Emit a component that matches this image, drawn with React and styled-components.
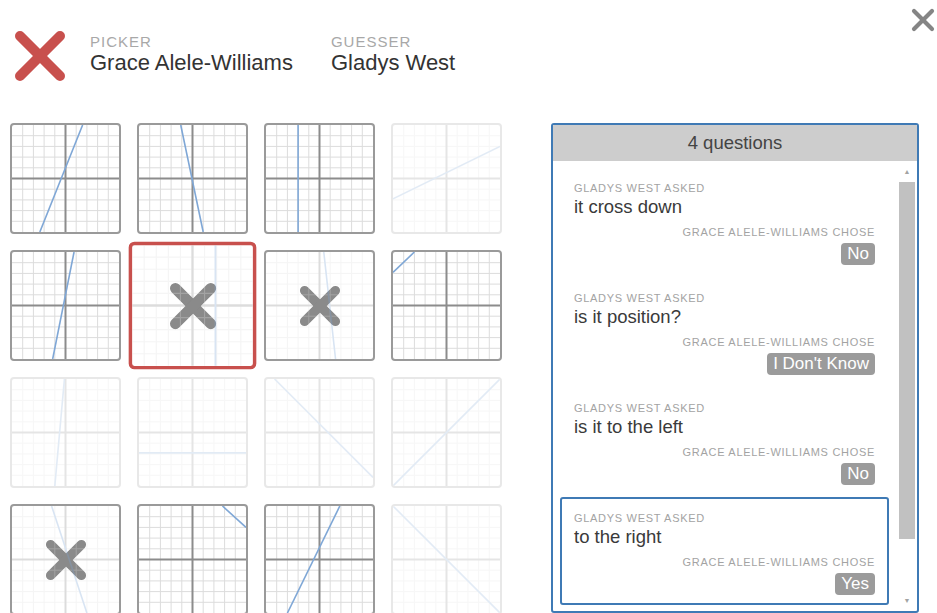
import React from "react";
import styled, { createGlobalStyle } from "styled-components";

const GlobalStyle = createGlobalStyle`
  html, body {
    margin: 0;
    padding: 0;
    background: #fff;
  }
  body {
    font-family: "Liberation Sans", Arial, sans-serif;
    color: #333;
    overflow: hidden;
  }
  * {
    box-sizing: border-box;
  }
`;

const red = "#c8504d";
const blue = "#3f7ab5";

// line endpoints in a 0..100 box, y down
const cards = [
  { line: [26, 100, 66, 0] },
  { line: [39, 0, 60, 100] },
  { line: [30, 0, 30, 100] },
  { line: [0, 69, 100, 20], faded: true },
  { line: [58, 0, 38, 100] },
  { line: [69, 0, 69, 100], crossed: true, picked: true },
  { line: [54, 0, 65, 100], crossed: true },
  { line: [0, 19, 20, 0] },
  { line: [49, 0, 40, 100], faded: true },
  { line: [0, 69, 100, 69], faded: true },
  { line: [8, 0, 100, 92], faded: true },
  { line: [0, 100, 100, 0], faded: true },
  { line: [37, 0, 70, 100], crossed: true },
  { line: [78, 0, 100, 20] },
  { line: [69, 0, 20, 100] },
  { line: [0, 0, 100, 100], faded: true },
];

const questions = [
  { text: "it cross down", answer: "No" },
  { text: "is it position?", answer: "I Don't Know" },
  { text: "is it to the left", answer: "No" },
  { text: "to the right", answer: "Yes", active: true },
];

const ticks = [10, 20, 30, 40, 60, 70, 80, 90];

function Graph({ line, dim }) {
  const [x1, y1, x2, y2] = line;
  return (
    <Plot viewBox="0 0 100 100" preserveAspectRatio="none" $dim={dim}>
      {ticks.map((t) => (
        <g key={t} stroke="#dcdcdc" strokeWidth="1">
          <line x1={t} y1="0" x2={t} y2="100" vectorEffect="non-scaling-stroke" />
          <line x1="0" y1={t} x2="100" y2={t} vectorEffect="non-scaling-stroke" />
        </g>
      ))}
      <line x1="50" y1="0" x2="50" y2="100" stroke="#8c8c8c" strokeWidth="2" vectorEffect="non-scaling-stroke" />
      <line x1="0" y1="50" x2="100" y2="50" stroke="#8c8c8c" strokeWidth="2" vectorEffect="non-scaling-stroke" />
      <line x1={x1} y1={y1} x2={x2} y2={y2} stroke="#7fa7d6" strokeWidth="1.6" vectorEffect="non-scaling-stroke" />
    </Plot>
  );
}

function Cross({ size, color, weight, inset = 6 }) {
  const far = 40 - inset;
  return (
    <svg width={size} height={size} viewBox="0 0 40 40">
      <g stroke={color} strokeWidth={weight} strokeLinecap="round">
        <line x1={inset} y1={inset} x2={far} y2={far} />
        <line x1={far} y1={inset} x2={inset} y2={far} />
      </g>
    </svg>
  );
}

function App() {
  return (
    <>
      <GlobalStyle />
      <Page>
        <Header>
          <Identity>
            <Cross size={50} color={red} weight={8} inset={4} />
            <Players>
              <Player>
                <Role>Picker</Role>
                <Name>Grace Alele-Williams</Name>
              </Player>
              <Player>
                <Role>Guesser</Role>
                <Name>Gladys West</Name>
              </Player>
            </Players>
          </Identity>
          <Close aria-label="close">
            <Cross size={24} color="#858585" weight={7} inset={5} />
          </Close>
        </Header>

        <Board>
          <Grid>
            {cards.map((card, i) => (
              <Card key={i} $faded={card.faded} $picked={card.picked}>
                <Graph line={card.line} dim={card.crossed} />
                {card.crossed && (
                  <Mark>
                    <Cross size={44} color="#8a8a8a" weight={8.5} />
                  </Mark>
                )}
              </Card>
            ))}
          </Grid>

          <Panel>
            <PanelHead>4 questions</PanelHead>
            <PanelBody>
              <Feed>
                {questions.map((q, i) => (
                  <Entry key={i} $active={q.active}>
                    <Caption>Gladys West asked</Caption>
                    <Question>{q.text}</Question>
                    <Caption $right>Grace Alele-Williams chose</Caption>
                    <AnswerRow>
                      <Badge>{q.answer}</Badge>
                    </AnswerRow>
                  </Entry>
                ))}
              </Feed>
              <ScrollBar>
                <Arrow>▲</Arrow>
                <Thumb />
                <Track />
                <Arrow>▼</Arrow>
              </ScrollBar>
            </PanelBody>
          </Panel>
        </Board>
      </Page>
    </>
  );
}

export default App;

const Page = styled.div`
  width: 937px;
  height: 613px;
  overflow: hidden;
`;

const Header = styled.header`
  display: flex;
  align-items: flex-start;
  padding: 8px 2px 0 15px;
`;

const Identity = styled.div`
  display: flex;
  align-items: flex-start;
  gap: 25px;
  margin-top: 23px;
`;

const Players = styled.div`
  display: flex;
  gap: 38px;
  margin-top: 2px;
`;

const Player = styled.div`
  display: flex;
  flex-direction: column;
`;

const Role = styled.span`
  font-size: 15px;
  line-height: 17px;
  letter-spacing: 1px;
  text-transform: uppercase;
  color: #a8a8a8;
`;

const Name = styled.span`
  font-size: 22px;
  line-height: 25px;
  color: #333;
`;

const Close = styled.button`
  margin-left: auto;
  padding: 0;
  border: none;
  background: none;
  display: flex;
  cursor: pointer;
`;

const Board = styled.main`
  display: flex;
  align-items: flex-start;
  gap: 49px;
  margin-top: 42px;
  padding-left: 10px;
`;

const Grid = styled.div`
  display: grid;
  grid-template-columns: repeat(4, 111px);
  grid-auto-rows: 111px;
  gap: 16px;
`;

const Card = styled.div`
  display: grid;
  border: ${({ $picked }) => ($picked ? `3px solid ${red}` : "2px solid #9a9a9a")};
  border-radius: ${({ $picked }) => ($picked ? "5px" : "4px")};
  background: #fff;
  overflow: hidden;
  opacity: ${({ $faded }) => ($faded ? 0.22 : 1)};
  transform: ${({ $picked }) => ($picked ? "scale(1.15)" : "none")};
  z-index: ${({ $picked }) => ($picked ? 1 : 0)};
  cursor: pointer;
`;

const Plot = styled.svg`
  grid-area: 1 / 1;
  width: 100%;
  height: 100%;
  display: block;
  opacity: ${({ $dim }) => ($dim ? 0.3 : 1)};
`;

const Mark = styled.div`
  grid-area: 1 / 1;
  display: flex;
  align-items: center;
  justify-content: center;
`;

const Panel = styled.section`
  width: 368px;
  height: 490px;
  border: 2px solid ${blue};
  border-radius: 3px;
  display: flex;
  flex-direction: column;
  overflow: hidden;
`;

const PanelHead = styled.div`
  height: 36px;
  flex-shrink: 0;
  display: flex;
  align-items: center;
  justify-content: center;
  background: #cdcdcd;
  font-size: 18.5px;
  color: #444;
`;

const PanelBody = styled.div`
  flex: 1;
  display: flex;
  min-height: 0;
`;

const Feed = styled.div`
  flex: 1;
  padding: 6px 9px 0 7px;
  overflow: hidden;
`;

const Entry = styled.div`
  border: 2px solid ${({ $active }) => ($active ? blue : "transparent")};
  border-radius: 3px;
  padding: 12px 12px 8px;
  margin-bottom: 2px;
`;

const Caption = styled.div`
  font-size: 11px;
  line-height: 14px;
  letter-spacing: 0.7px;
  text-transform: uppercase;
  color: #a3a3a3;
  text-align: ${({ $right }) => ($right ? "right" : "left")};
`;

const Question = styled.div`
  font-size: 18.5px;
  line-height: 22px;
  color: #3a3a3a;
  margin: 1px 0 7px;
`;

const AnswerRow = styled.div`
  display: flex;
  justify-content: flex-end;
  margin-top: 4px;
`;

const Badge = styled.span`
  background: #9b9b9b;
  color: #fff;
  font-size: 17px;
  line-height: 22px;
  padding: 0 6px;
  border-radius: 4px;
`;

const ScrollBar = styled.div`
  width: 19px;
  display: flex;
  flex-direction: column;
  padding: 0 2px 0 1px;
`;

const Arrow = styled.div`
  height: 21px;
  flex-shrink: 0;
  display: flex;
  align-items: center;
  justify-content: center;
  font-size: 7px;
  color: #a3a3a3;
`;

const Thumb = styled.div`
  height: 357px;
  flex-shrink: 0;
  background: #c1c1c1;
`;

const Track = styled.div`
  flex: 1;
`;
